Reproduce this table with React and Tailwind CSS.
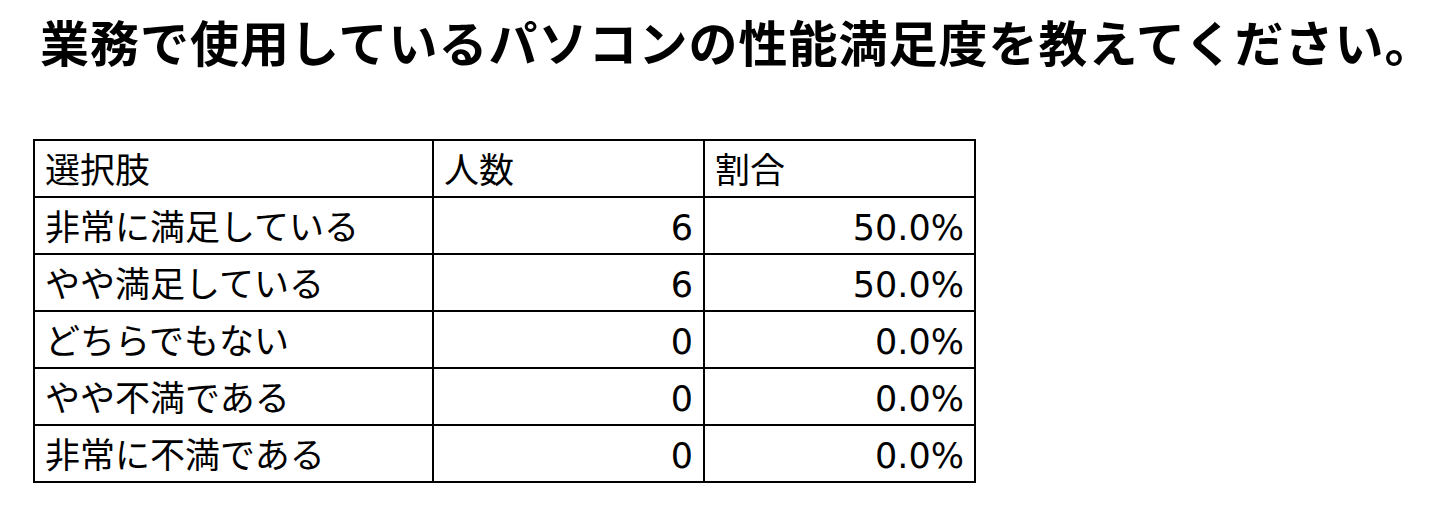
import React from 'react';

const rows = [
    { label: '非常に満足している', count: 6, rate: '50.0%' },
    { label: 'やや満足している', count: 6, rate: '50.0%' },
    { label: 'どちらでもない', count: 0, rate: '0.0%' },
    { label: 'やや不満である', count: 0, rate: '0.0%' },
    { label: '非常に不満である', count: 0, rate: '0.0%' },
];

export default function App() {
    return (
        <div
            className="w-[1440px] h-[509px] overflow-hidden bg-white text-black"
            style={{ fontFamily: '"DejaVu Sans", "Noto Sans CJK JP", sans-serif' }}
        >
            {/* Title */}
            <h1 className="pl-[40px] pt-[16px] text-[49px] leading-[60px] font-bold tracking-[1px] whitespace-nowrap">
                業務で使用しているパソコンの性能満足度を教えてください。
            </h1>

            {/* Result table */}
            <table className="ml-[33px] mt-[63px] border-collapse border-2 border-black text-[35px] leading-[44px] whitespace-nowrap">
                <thead>
                    <tr className="h-[57px]">
                        <th className="w-[399px] border-2 border-black px-[10px] pt-[4px] text-left font-normal">選択肢</th>
                        <th className="w-[271px] border-2 border-black px-[10px] pt-[4px] text-left font-normal">人数</th>
                        <th className="w-[271px] border-2 border-black px-[10px] pt-[4px] text-left font-normal">割合</th>
                    </tr>
                </thead>
                <tbody>
                    {rows.map((row) => (
                        <tr key={row.label} className="h-[57px]">
                            <td className="border-2 border-black px-[10px] pt-[4px]">{row.label}</td>
                            <td className="border-2 border-black px-[10px] pt-[4px] text-right">{row.count}</td>
                            <td className="border-2 border-black px-[10px] pt-[4px] text-right">{row.rate}</td>
                        </tr>
                    ))}
                </tbody>
            </table>
        </div>
    );
}
